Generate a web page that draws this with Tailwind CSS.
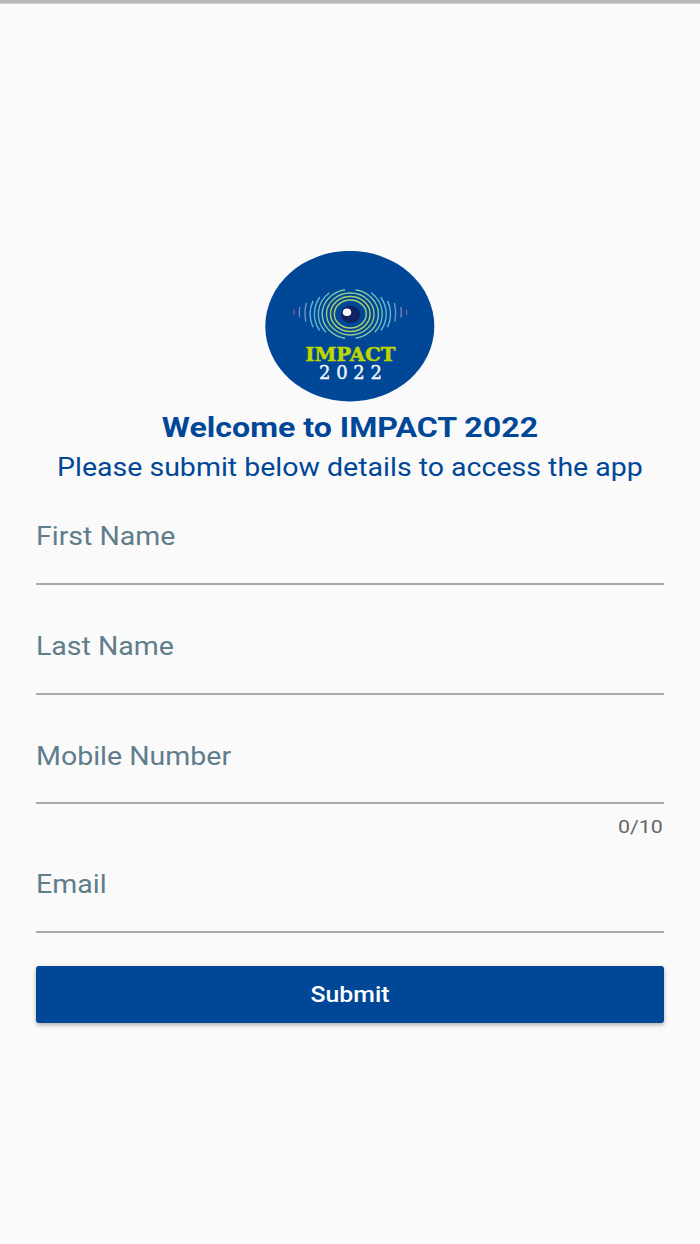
<!DOCTYPE html>
<html lang="en">
  <head>
    <meta charset="UTF-8" />
    <title>IMPACT 2022</title>
    <meta name="viewport" content="width=device-width, initial-scale=1.0" />
    <script src="https://cdn.jsdelivr.net/npm/@tailwindcss/browser@4"></script>
  </head>

  <body class="bg-[#fafafa] h-[1244px] overflow-hidden font-['Roboto',sans-serif]">
    <!-- Status bar -->
    <div class="h-1 bg-[#b9b9b9] border-b border-[#cfcfcf]"></div>

    <main class="px-9 pt-[247px] flex flex-col">
      <!-- Logo -->
      <svg class="self-center w-[170px] h-[151px]" viewBox="265 251 170 151" fill="none">
        <ellipse cx="349.8" cy="326.2" rx="84.5" ry="75.3" fill="#004798" />
        <g stroke-width="1.4">
          <ellipse cx="350.3" cy="314" rx="16" ry="14" stroke="#a9cf6b" />
          <ellipse cx="350.3" cy="314" rx="19.8" ry="17.5" stroke="#a9cf6b" />
          <ellipse cx="350.3" cy="314" rx="23.8" ry="21" stroke="#93c98a" />
          <!-- left waves -->
          <g>
            <path d="M345 289.8A27.8 24.6 0 0 0 345 338.2" stroke="#86c8a0" />
            <path d="M329.3 292.7A32 28.3 0 0 0 325.8 332.2" stroke="#6cbfba" />
            <path d="M319.9 297A36 31.8 0 0 0 319.6 330.4" stroke="#62b9cd" />
            <path d="M313 300.9A40.2 35.5 0 0 0 313.1 327.3" stroke="#62b9cd" />
            <path d="M306.3 303Q303.9 312.5 305.9 321.5" stroke="#6f94c8" />
            <path d="M299.8 307Q298.8 312 299.6 317.5" stroke="#7d7fba" />
            <path d="M294 309.5V315" stroke="#74579f" />
          </g>
          <!-- right waves -->
          <g transform="translate(700.6 0) scale(-1 1)">
            <path d="M345 289.8A27.8 24.6 0 0 0 345 338.2" stroke="#86c8a0" />
            <path d="M329.3 292.7A32 28.3 0 0 0 325.8 332.2" stroke="#6cbfba" />
            <path d="M319.9 297A36 31.8 0 0 0 319.6 330.4" stroke="#62b9cd" />
            <path d="M313 300.9A40.2 35.5 0 0 0 313.1 327.3" stroke="#62b9cd" />
            <path d="M306.3 303Q303.9 312.5 305.9 321.5" stroke="#6f94c8" />
            <path d="M299.8 307Q298.8 312 299.6 317.5" stroke="#7d7fba" />
            <path d="M294 309.5V315" stroke="#74579f" />
          </g>
        </g>
        <ellipse cx="350.5" cy="314.3" rx="9.6" ry="8.7" fill="#14215f" />
        <ellipse cx="347" cy="312.2" rx="4.2" ry="3.8" fill="#fff" />
        <text x="305.3" y="361" textLength="90" lengthAdjust="spacingAndGlyphs" fill="#bfd600" stroke="#bfd600" stroke-width="0.5" class="font-['DejaVu_Serif',serif] font-bold text-[18px]">IMPACT</text>
        <text x="319" y="378.6" textLength="63" lengthAdjust="spacing" fill="#f2f6fb" stroke="#f2f6fb" stroke-width="0.4" class="font-['DejaVu_Serif',serif] text-[18px]">2022</text>
      </svg>

      <h1 class="mt-2 h-9 leading-9 self-center text-[28.5px] font-bold text-[#004798] whitespace-nowrap scale-x-[1.127]">Welcome to IMPACT 2022</h1>
      <p class="mt-1 h-9 leading-9 self-center text-[25.3px] text-[#004798] whitespace-nowrap scale-x-[1.127]">Please submit below details to access the app</p>

      <!-- Form -->
      <form class="flex flex-col">
        <label class="mt-3.5 h-[85px] pt-[19px] border-b-2 border-[#a8aaa9]">
          <span class="block w-fit leading-9 text-[25.3px] text-[#607d8b] origin-left scale-x-[1.127]">First Name</span>
        </label>
        <label class="mt-[25px] h-[85px] pt-[19px] border-b-2 border-[#a8aaa9]">
          <span class="block w-fit leading-9 text-[25.3px] text-[#607d8b] origin-left scale-x-[1.127]">Last Name</span>
        </label>
        <label class="mt-6 h-[85px] pt-5 border-b-2 border-[#a8aaa9]">
          <span class="block w-fit leading-9 text-[25.3px] text-[#607d8b] origin-left scale-x-[1.127]">Mobile Number</span>
        </label>
        <div class="mt-[11px] mr-[1.5px] h-6 leading-6 self-end text-[19px] text-[#666666] origin-right scale-x-[1.127]">0/10</div>
        <label class="mt-[9px] h-[85px] pt-[19px] border-b-2 border-[#a8aaa9]">
          <span class="block w-fit leading-9 text-[25.3px] text-[#607d8b] origin-left scale-x-[1.127]">Email</span>
        </label>
        <button type="button" class="mt-[32.5px] h-[57px] rounded-[3px] bg-[#004798] text-white shadow-[0_2px_4px_rgba(0,0,0,0.3)]">
          <span class="block w-fit mx-auto text-[22px] font-medium scale-x-[1.127]">Submit</span>
        </button>
      </form>
    </main>
  </body>
</html>
